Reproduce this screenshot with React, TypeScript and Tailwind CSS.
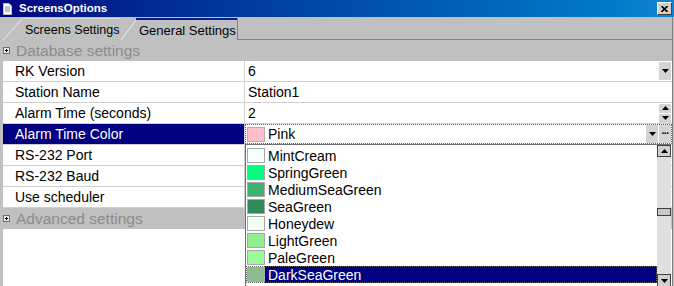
import React from "react";

const colors = [
  { name: "MintCream", hex: "#f5fffa" },
  { name: "SpringGreen", hex: "#00ff7f" },
  { name: "MediumSeaGreen", hex: "#3cb371" },
  { name: "SeaGreen", hex: "#2e8b57" },
  { name: "Honeydew", hex: "#f0fff0" },
  { name: "LightGreen", hex: "#90ee90" },
  { name: "PaleGreen", hex: "#98fb98" },
  { name: "DarkSeaGreen", hex: "#8fbc8f" },
];

function Arrow({ up }: { up?: boolean }) {
  return (
    <svg width="7" height="4" viewBox="0 0 7 4">
      <polygon points={up ? "0,4 7,4 3.5,0" : "0,0 7,0 3.5,4"} fill="#000" />
    </svg>
  );
}

function PlusBox() {
  return (
    <svg width="7" height="7" viewBox="0 0 7 7" className="ml-[3px] shrink-0">
      <rect x="0.5" y="0.5" width="6" height="6" fill="#e8e8e8" stroke="#707070" />
      <line x1="2" y1="3.5" x2="5" y2="3.5" stroke="#000" />
      <line x1="3.5" y1="2" x2="3.5" y2="5" stroke="#000" />
    </svg>
  );
}

function Category({ label }: { label: string }) {
  return (
    <div className="h-[21px] flex items-center shrink-0">
      <PlusBox />
      <span className="ml-[6px] text-[15.5px] leading-none text-[#8c8c8c]">{label}</span>
    </div>
  );
}

function Row({ label, selected, children }: { label: string; selected?: boolean; children?: React.ReactNode }) {
  return (
    <div className="h-[21px] ml-[3px] flex bg-white border-b border-[#d0d0d0] shrink-0">
      <div
        className={
          "w-[241px] pl-[12px] flex items-center text-[14px] leading-none " +
          (selected ? "bg-[#000080] text-white" : "")
        }
      >
        {label}
      </div>
      <div className="w-px bg-[#d0d0d0]" />
      <div className="flex-1 flex items-center text-[14px] leading-none">{children}</div>
    </div>
  );
}

export default function App() {
  return (
    <div className="w-[674px] h-[286px] overflow-hidden bg-[#c0c0c0] relative flex flex-col font-['Liberation_Sans',Arial,sans-serif] text-black">
      {/* title bar */}
      <div className="h-[17px] shrink-0 flex items-center bg-linear-to-r from-[#000080] to-[#1084d0]">
        <svg width="9" height="12" viewBox="0 0 9 12" className="ml-[3px]">
          <path d="M0.5 0.5 H6 L8.5 3 V11.5 H0.5 Z" fill="#fff" stroke="#c0c0c0" />
          <line x1="2" y1="4" x2="7" y2="4" stroke="#8080a0" />
          <line x1="2" y1="6" x2="7" y2="6" stroke="#8080a0" />
          <line x1="2" y1="8" x2="7" y2="8" stroke="#8080a0" />
        </svg>
        <span className="ml-[7px] text-white font-bold text-[11.5px] leading-none">ScreensOptions</span>
        <div className="ml-auto mr-[2px] w-[15px] h-[13px] flex items-center justify-center bg-[#d4d0c8] border border-t-white border-l-white border-r-[#404040] border-b-[#404040]">
          <svg width="7" height="6" viewBox="0 0 7 6">
            <path d="M0.5 0 L6.5 6 M6.5 0 L0.5 6" stroke="#000" strokeWidth="1.6" />
          </svg>
        </div>
      </div>

      <div className="flex-1 flex flex-col w-[673px] border-r border-[#808080]">
        {/* tabs */}
        <div className="h-[23px] shrink-0 flex items-end">
          <div className="relative ml-[3px] w-[118px] h-[22px] flex items-center pl-[22px] pt-[3px]">
            <svg width="20" height="22" viewBox="0 0 20 22" className="absolute left-0 top-0">
              <line x1="0" y1="22" x2="19.5" y2="0.5" stroke="#f0f0f0" />
            </svg>
            <div className="absolute left-[19px] right-0 top-0 h-px bg-[#dadada]" />
            <span className="text-[12.5px] leading-none whitespace-nowrap">Screens Settings</span>
          </div>
          <div className="relative w-[117px] h-[22px] flex items-center pl-[18px] pt-[3px] border-r border-[#808080]">
            <svg width="17" height="22" viewBox="0 0 17 22" className="absolute left-0 top-0">
              <line x1="0" y1="22" x2="16" y2="1" stroke="#f0f0f0" />
            </svg>
            <div className="absolute left-[15px] right-0 top-0 h-[2px] bg-[#0a1a90]" />
            <span className="text-[13px] leading-none whitespace-nowrap">General Settings</span>
          </div>
          <div className="flex-1 h-full border-b border-[#808080]" />
        </div>

        {/* property grid */}
        <Category label="Database settings" />
        <Row label="RK Version">
          <span className="pl-[3px]">6</span>
          <div className="ml-auto mr-px w-[12px] h-[18px] bg-[#d4d4d4] flex items-center justify-center">
            <Arrow />
          </div>
        </Row>
        <Row label="Station Name">
          <span className="pl-[3px]">Station1</span>
        </Row>
        <Row label="Alarm Time (seconds)">
          <span className="pl-[3px]">2</span>
          <div className="ml-auto mr-px w-[12px] flex flex-col gap-px">
            <div className="h-[9px] bg-[#d4d4d4] flex items-center justify-center">
              <Arrow up />
            </div>
            <div className="h-[9px] bg-[#d4d4d4] flex items-center justify-center">
              <Arrow />
            </div>
          </div>
        </Row>
        <Row label="Alarm Time Color" selected>
          <div className="h-full flex-1 flex items-center border border-dotted border-[#606060]">
            <div className="ml-px w-[18px] h-[15px] bg-[#ffc0cb] border border-[#b0b0b0]" />
            <span className="ml-[3px]">Pink</span>
            <div className="ml-auto w-[12px] h-full bg-[#d4d4d4] flex items-center justify-center">
              <Arrow />
            </div>
            <div className="ml-px w-[12px] h-full bg-[#d4d4d4] flex items-center justify-center text-[10px] leading-none font-bold tracking-[-1px]">
              ···
            </div>
          </div>
        </Row>
        <Row label="RS-232 Port" />
        <Row label="RS-232 Baud" />
        <Row label="Use scheduler" />
        <Category label="Advanced settings" />
        <div className="flex-1 ml-[3px] bg-white" />
      </div>

      {/* open colour dropdown */}
      <div className="absolute left-[245px] top-[144px] w-[426px] h-[143px] bg-white border-l border-t border-[#707070] flex">
        <div className="flex-1 flex flex-col pt-[2px]">
          {colors.map((c, i) => {
            const sel = i === colors.length - 1;
            return (
              <div
                key={c.name}
                className={
                  "h-[17px] flex items-center shrink-0 " +
                  (sel ? "outline-1 outline-dotted outline-[#606060] -outline-offset-1" : "")
                }
              >
                <div className="ml-px w-[18px] h-[15px] border border-[#a8a8a8]" style={{ backgroundColor: c.hex }} />
                <div
                  className={
                    "flex-1 h-full flex items-center pl-[3px] text-[14px] leading-none " +
                    (sel ? "bg-[#000080] text-white" : "")
                  }
                >
                  {c.name}
                </div>
              </div>
            );
          })}
        </div>
        <div className="w-[14px] flex flex-col bg-[#e0e0e0]">
          <div className="h-[12px] bg-[#d0d0d0] border border-[#404040] flex items-center justify-center">
            <Arrow up />
          </div>
          <div className="flex-1 relative">
            <div className="absolute left-0 right-0 top-[51px] h-[8px] bg-[#c8c8c8] border border-[#404040]" />
          </div>
          <div className="h-[13px] bg-[#d0d0d0] border border-[#404040] flex items-center justify-center">
            <Arrow />
          </div>
        </div>
      </div>
    </div>
  );
}
